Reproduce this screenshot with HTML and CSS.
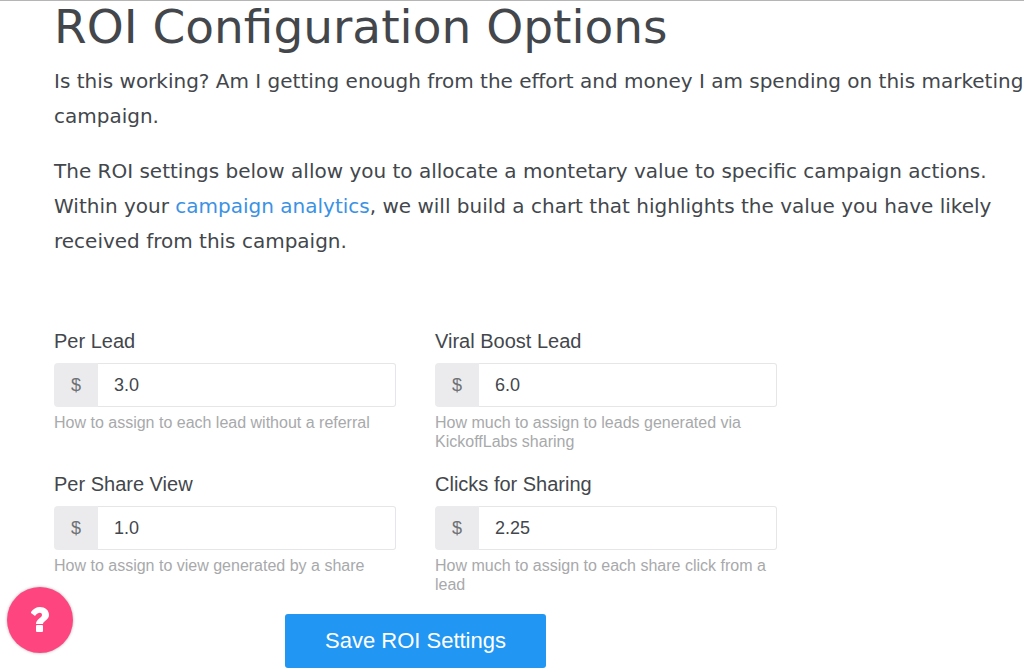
FILE: index.html
```html
<!DOCTYPE html>
<html lang="en">
<head>
  <meta charset="utf-8">
  <title>ROI Configuration Options</title>
  <meta name="viewport" content="width=device-width, initial-scale=1.0">
  <link rel="stylesheet" href="styles.css">
</head>
<body>
  <main class="container">
    <h1>ROI Configuration Options</h1>
    <p>Is this working? Am I getting enough from the effort and money I am spending on this marketing campaign.</p>
    <p>The ROI settings below allow you to allocate a montetary value to specific campaign actions. Within your <a href="#">campaign analytics</a>, we will build a chart that highlights the value you have likely received from this campaign.</p>

    <form class="roi-form">
      <div class="form-grid">
        <div class="form-group">
          <label for="perLead">Per Lead</label>
          <div class="input-group">
            <span class="addon">$</span>
            <input type="text" id="perLead" class="form-input" value="3.0">
          </div>
          <div class="help-text">How to assign to each lead without a referral</div>
        </div>

        <div class="form-group">
          <label for="viralLead">Viral Boost Lead</label>
          <div class="input-group">
            <span class="addon">$</span>
            <input type="text" id="viralLead" class="form-input" value="6.0">
          </div>
          <div class="help-text">How much to assign to leads generated via KickoffLabs sharing</div>
        </div>

        <div class="form-group">
          <label for="shareView">Per Share View</label>
          <div class="input-group">
            <span class="addon">$</span>
            <input type="text" id="shareView" class="form-input" value="1.0">
          </div>
          <div class="help-text">How to assign to view generated by a share</div>
        </div>

        <div class="form-group">
          <label for="shareClick">Clicks for Sharing</label>
          <div class="input-group">
            <span class="addon">$</span>
            <input type="text" id="shareClick" class="form-input" value="2.25">
          </div>
          <div class="help-text">How much to assign to each share click from a lead</div>
        </div>
      </div>

      <button type="submit" class="save-btn">Save ROI Settings</button>
    </form>
  </main>

  <button type="button" class="help-btn" aria-label="Help">
    <svg viewBox="0 0 20 26" width="20" height="26" fill="#fff">
      <path d="M1 5C3 2 6 0 10 0c5 0 9 3 9 8 0 5-6 6-6 9H6c0-5 6-6 6-9 0-3-4-3-7 1L1 6z"/>
      <rect x="6" y="18" width="7" height="7" rx="1"/>
    </svg>
  </button>
</body>
</html>
```
FILE: styles.css
```css
* {
  box-sizing: border-box;
}

body {
  margin: 0;
  border-top: 1px solid #b5b5b5;
  font-family: "DejaVu Sans", Verdana, sans-serif;
  color: #43474c;
  background: #fff;
}

.container {
  padding-left: 54px;
}

h1 {
  margin: 0;
  font-size: 47px;
  line-height: 52px;
  font-weight: 400;
}

p {
  margin: 11px 0 20px;
  font-size: 20px;
  line-height: 35px;
}

p + p {
  margin-top: 0;
}

a {
  color: #3b92e4;
  text-decoration: none;
}

.roi-form {
  max-width: 723px;
  margin-top: 70px;
  font-family: "Liberation Sans", Arial, sans-serif;
}

.form-grid {
  display: grid;
  grid-template-columns: 1fr 1fr;
  column-gap: 39px;
  row-gap: 21px;
}

.form-group label {
  display: block;
  margin-bottom: 10px;
  font-size: 20px;
  line-height: 24px;
}

.input-group {
  display: flex;
  height: 44px;
}

.addon {
  width: 44px;
  border-radius: 4px 0 0 4px;
  background: #ebebed;
  color: #6f7275;
  font-size: 18px;
  line-height: 44px;
  text-align: center;
}

.form-input {
  flex: 1;
  min-width: 0;
  border: 1px solid #e6e6e8;
  border-left-width: 0;
  border-radius: 0 3px 3px 0;
  padding: 0 16px;
  font-family: inherit;
  font-size: 18px;
  color: #43474c;
  background: #fff;
}

.help-text {
  margin-top: 6px;
  font-size: 16px;
  line-height: 19px;
  color: #a8a9ab;
}

.save-btn {
  display: block;
  margin: 20px auto 0;
  padding: 0 40px;
  height: 54px;
  border: 0;
  border-radius: 3px;
  background: #2196f3;
  color: #fff;
  font-family: inherit;
  font-size: 22px;
  cursor: pointer;
}

.help-btn {
  position: fixed;
  left: 7px;
  bottom: 17px;
  display: flex;
  align-items: center;
  justify-content: center;
  width: 66px;
  height: 66px;
  padding: 0;
  border: 0;
  border-radius: 50%;
  background: #ff457f;
  box-shadow: 0 0 3px rgba(0, 0, 0, 0.3);
  cursor: pointer;
}
```
